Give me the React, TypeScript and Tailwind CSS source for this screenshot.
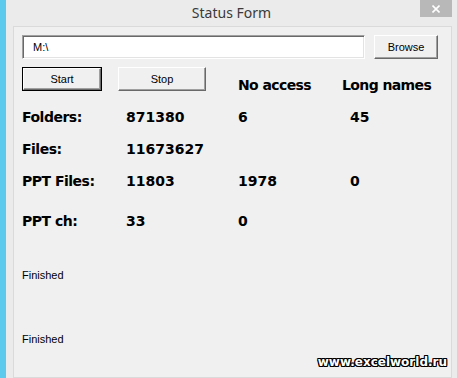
import React from "react";

const bold = "font-['DejaVu_Sans',sans-serif] font-bold text-[14px] leading-[16px] h-[16px] text-black";
const small = "font-['Liberation_Sans',Arial,sans-serif] text-[11px] text-black";

function Row({ cells, className = "" }: { cells: string[]; className?: string }) {
  return (
    <div className={"grid grid-cols-[104px_112px_104px_auto] " + bold + " " + className}>
      {cells.map((c, i) => (
        <div key={i} className={(i === 3 ? "pl-[8px]" : "") + (i === 0 ? " tracking-[-0.5px]" : "")}>
          {c}
        </div>
      ))}
    </div>
  );
}

function Button({ label, w, main }: { label: string; w: string; main?: boolean }) {
  return (
    <div className={(main ? "border border-black " : "") + w + " h-[24px] flex"}>
      <div className="flex-1 flex items-center justify-center bg-[#f0f0f0] border border-t-white border-l-white border-r-[#696969] border-b-[#696969] shadow-[inset_-1px_-1px_0_#a0a0a0]">
        <span className={small}>{label}</span>
      </div>
    </div>
  );
}

export default function App() {
  return (
    <div className="w-[457px] h-[378px] flex bg-[#ebebeb] overflow-hidden relative">
      <div className="w-[6px] bg-[#5ccaec]" />
      <div className="flex-1 flex flex-col">
        <div className="h-[26px] relative flex items-center justify-center">
          <span className="font-['Noto_Sans',sans-serif] text-[14px] text-[#3a3a3a] -mt-[2px]">Status Form</span>
          <div className="absolute top-0 right-[5px] w-[32px] h-[17px] bg-[#b8b8b8] flex items-center justify-center">
            <svg width="8" height="8" viewBox="0 0 8 8">
              <path d="M0.5 0.5 L7.5 7.5 M7.5 0.5 L0.5 7.5" stroke="white" strokeWidth="1.6" />
            </svg>
          </div>
        </div>
        <div className="ml-[7px] mr-[5px] flex-1 border border-[#dadada] bg-[#f0f0f0] pl-[8px] pt-[8px]">
          <div className="flex gap-[9px]">
            <div className="w-[343px] h-[24px] bg-white border border-t-[#a0a0a0] border-l-[#a0a0a0] border-r-white border-b-white shadow-[inset_1px_1px_0_#696969,inset_-1px_-1px_0_#e3e3e3] flex items-center pl-[10px]">
              <span className={small}>M:\</span>
            </div>
            <Button label="Browse" w="w-[64px]" />
          </div>
          <div className="flex mt-[8px] h-[24px]">
            <Button label="Start" w="w-[80px]" main />
            <div className="ml-[16px]">
              <Button label="Stop" w="w-[88px]" />
            </div>
            <div className={"ml-[32px] pt-[10px] flex tracking-[-0.6px] " + bold}>
              <div className="w-[104px]">No access</div>
              <div>Long names</div>
            </div>
          </div>
          <Row className="mt-[18px]" cells={["Folders:", "871380", "6", "45"]} />
          <Row className="mt-[16px]" cells={["Files:", "11673627", "", ""]} />
          <Row className="mt-[16px]" cells={["PPT Files:", "11803", "1978", "0"]} />
          <Row className="mt-[24px]" cells={["PPT ch:", "33", "0", ""]} />
          <div className={small + " leading-[13px] mt-[40px]"}>Finished</div>
          <div className={small + " leading-[13px] mt-[51px]"}>Finished</div>
        </div>
      </div>
      <div className="absolute right-[10px] bottom-[9px] font-['DejaVu_Sans',sans-serif] font-bold text-[12px] leading-[14px] text-white [text-shadow:1px_0_#000,-1px_0_#000,0_1px_#000,0_-1px_#000,1px_1px_#000,-1px_-1px_#000,1px_-1px_#000,-1px_1px_#000]">
        www.excelworld.ru
      </div>
    </div>
  );
}
